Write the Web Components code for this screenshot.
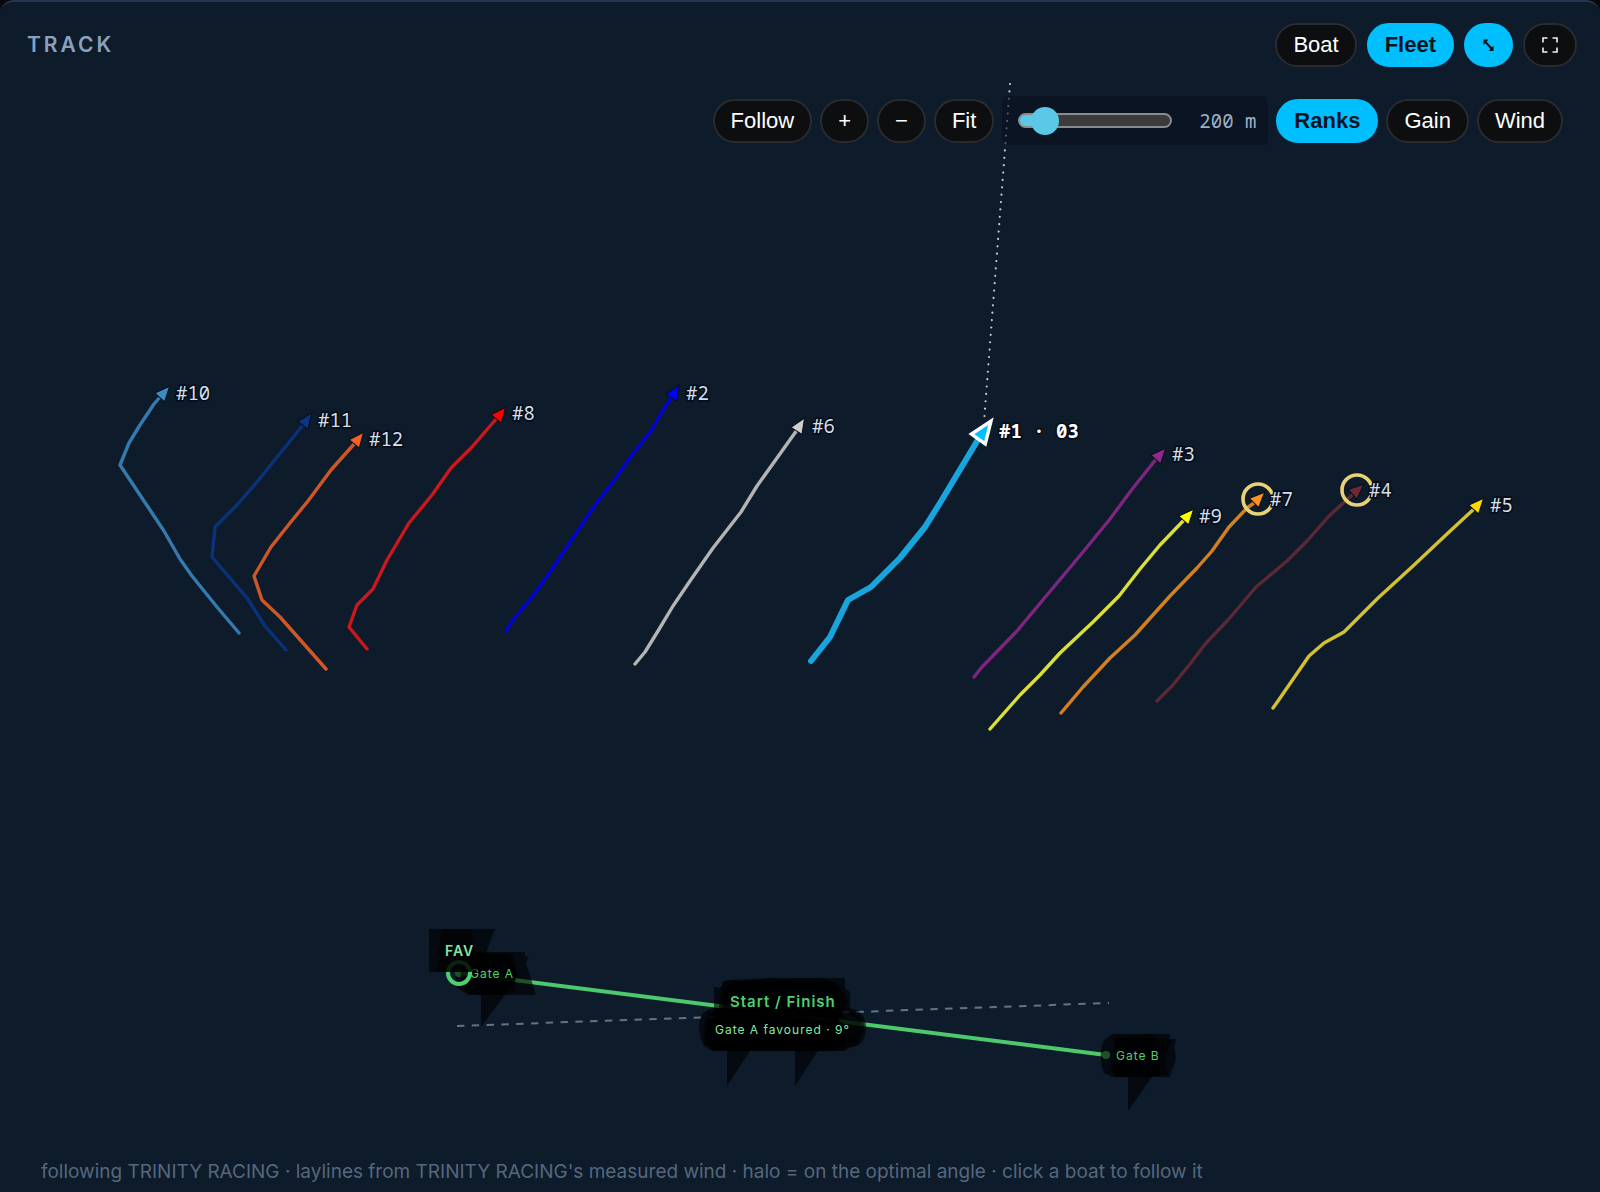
<!DOCTYPE html>
<html lang="en">
<head>
<meta charset="utf-8">
<title>Track</title>
<style>
  body {
    margin: 0;
    background: #0a0a0a;
    font-family: Inter, "Liberation Sans", sans-serif;
  }
</style>
</head>
<body>
<track-card heading="Track">
  <pill-button slot="actions">Boat</pill-button>
  <pill-button slot="actions" active>Fleet</pill-button>
  <pill-button slot="actions" active label="Resize">
    <svg width="13" height="14" viewBox="0 0 13 14" fill="none" stroke="#06141f" stroke-width="2">
      <path d="M3.500 4L9.500 10.500"/>
      <path d="M1.500 1.500H6.500L1.500 7ZM11.500 13H6.500L11.500 7.500Z" fill="#06141f" stroke="none"/>
    </svg>
  </pill-button>
  <pill-button slot="actions" label="Full screen">
    <svg width="18" height="16" viewBox="0 0 18 16" fill="none" stroke="#f2f2f2" stroke-width="1.600">
      <path d="M2 5.500V1H6.500M11.500 1H16V5.500M16 10.500V15H11.500M6.500 15H2V10.500"/>
    </svg>
  </pill-button>

  <map-toolbar slot="tools">
    <pill-button>Follow</pill-button>
    <pill-button>+</pill-button>
    <pill-button>−</pill-button>
    <pill-button>Fit</pill-button>
    <tail-slider value="200"></tail-slider>
    <pill-button active>Ranks</pill-button>
    <pill-button>Gain</pill-button>
    <pill-button>Wind</pill-button>
  </map-toolbar>

  <race-map slot="map"></race-map>

  <span slot="note">following TRINITY RACING · laylines from TRINITY RACING's measured wind · halo = on the optimal angle · click a boat to follow it</span>
</track-card>

<script>
class TrackCard extends HTMLElement {
  constructor() {
    super();
    this.attachShadow({ mode: "open" });
    this.render();
  }

  render() {
    this.shadowRoot.innerHTML = `
      <style>
        :host {
          display: flex;
          flex-direction: column;
          box-sizing: border-box;
          min-height: 100vh;
          background: #0d1b2a;
          border-top: 2px solid #22344f;
          border-radius: 14px 14px 0 0;
          overflow: hidden;
        }
        header {
          display: flex;
          justify-content: space-between;
          align-items: center;
          padding: 21px 23px 15px 27px;
        }
        h2 {
          margin: 0;
          font-size: 21px;
          font-weight: 600;
          line-height: 24px;
          letter-spacing: 3px;
          text-transform: uppercase;
          color: #8aa0bf;
        }
        .actions {
          display: flex;
          gap: 10px;
        }
        .stage {
          display: grid;
        }
        .map,
        .tools {
          grid-area: 1 / 1;
        }
        .tools {
          z-index: 1;
          justify-self: end;
          align-self: start;
          padding: 14px 37px 0 0;
        }
        footer {
          padding: 0 41px 6px;
          font-size: 19px;
          line-height: 28px;
          color: #56677d;
        }
      </style>
      <header>
        <h2></h2>
        <div class="actions"><slot name="actions"></slot></div>
      </header>
      <div class="stage">
        <div class="map"><slot name="map"></slot></div>
        <div class="tools"><slot name="tools"></slot></div>
      </div>
      <footer><slot name="note"></slot></footer>
    `;
    this.shadowRoot.querySelector("h2").textContent = this.getAttribute("heading");
  }
}

class PillButton extends HTMLElement {
  constructor() {
    super();
    this.attachShadow({ mode: "open" });
    this.render();
  }

  render() {
    this.shadowRoot.innerHTML = `
      <style>
        :host {
          display: inline-flex;
        }
        button {
          display: flex;
          align-items: center;
          justify-content: center;
          height: 44px;
          padding: 0 16px;
          border: 2px solid #2a2b2e;
          border-radius: 22px;
          background: #0d0e10;
          color: #fff;
          font: 22px "Liberation Sans", Arial, sans-serif;
          cursor: pointer;
        }
        :host([active]) button {
          border-color: #00bfff;
          background: #00bfff;
          color: #06141f;
          font-weight: bold;
        }
      </style>
      <button type="button"><slot></slot></button>
    `;
    if (this.hasAttribute("label")) {
      this.shadowRoot.querySelector("button").setAttribute("aria-label", this.getAttribute("label"));
    }
  }
}

class MapToolbar extends HTMLElement {
  constructor() {
    super();
    this.attachShadow({ mode: "open" });
    this.shadowRoot.innerHTML = `
      <style>
        :host {
          display: flex;
          align-items: center;
          gap: 8px;
        }
      </style>
      <slot></slot>
    `;
  }
}

class TailSlider extends HTMLElement {
  constructor() {
    super();
    this.attachShadow({ mode: "open" });
    this.render();
  }

  render() {
    this.shadowRoot.innerHTML = `
      <style>
        :host {
          display: flex;
          align-items: center;
          gap: 10px;
          height: 49px;
          padding: 0 12px 0 16px;
          border-radius: 6px;
          background: rgba(8, 16, 30, 0.6);
        }
        input {
          appearance: none;
          width: 154px;
          height: 28px;
          margin: 0;
          background: none;
        }
        input::-webkit-slider-runnable-track {
          box-sizing: border-box;
          height: 15px;
          border: 2px solid #8b8b8b;
          border-radius: 8px;
          background: linear-gradient(90deg, #5bc8e8 24px, #3b3b3b 24px);
        }
        input::-webkit-slider-thumb {
          appearance: none;
          width: 28px;
          height: 28px;
          margin-top: -8px;
          border-radius: 50%;
          background: #5bc8e8;
        }
        output {
          min-width: 74px;
          text-align: right;
          font: 19px "Noto Sans Mono", "DejaVu Sans Mono", monospace;
          color: #9fb0c6;
        }
      </style>
      <input id="tail" type="range" min="80" max="1500" aria-label="Tail length">
      <output for="tail"></output>
    `;
    const input = this.shadowRoot.querySelector("input");
    const output = this.shadowRoot.querySelector("output");
    input.value = this.getAttribute("value");
    const update = () => (output.textContent = `${input.value} m`);
    input.addEventListener("input", update);
    update();
  }
}

// tip / base: nose and stern of the arrow, at: where the label starts
const BOATS = [
  { label: "#10", color: "#3d8bc6", tip: [169, 387], base: [161, 396], at: [176, 393],
    path: "239,633 217,607 192,576 180,559 164,531 120,465 129,443 140,425 154,404" },
  { label: "#11", color: "#0b3688", tip: [311, 414], base: [303, 425], at: [318, 420],
    path: "286,650 265,626 247,598 212,557 215,527 237,505 257,482" },
  { label: "#12", color: "#f26227", tip: [363, 433], base: [355, 443], at: [369, 439],
    path: "326,669 280,617 262,600 254,576 271,547 290,523 308,501 331,470" },
  { label: "#8", color: "#ff0000", line: "#ca181c", tip: [505, 408], base: [497, 418], at: [512, 413],
    path: "367,649 349,627 357,605 373,589 387,560 409,523 432,495 451,468 472,447" },
  { label: "#2", color: "#0000ff", line: "#0303d4", tip: [679, 386], base: [671, 398], at: [686, 393],
    path: "506,631 513,620 533,596 553,568 573,538 593,508 613,482 632,455 651,431 662,412" },
  { label: "#6", color: "#d2cfcb", tip: [804, 419], base: [797, 430], at: [812, 426],
    path: "635,664 645,652 658,631 673,606 690,581 713,548 741,512 757,486" },
  { label: "#3", color: "#93278f", tip: [1165, 449], base: [1157, 458], at: [1172, 454],
    path: "974,677 982,667 1017,631 1047,595 1083,552 1110,519 1133,488" },
  { label: "#9", color: "#ffff00", line: "#dbdf38", tip: [1193, 510], base: [1185, 519], at: [1199, 516],
    path: "990,729 1020,695 1040,675 1060,653 1093,622 1119,596 1140,569 1160,545" },
  { label: "#7", color: "#f7931e", tip: [1264, 493], base: [1254, 503], at: [1270, 499], halo: [1258, 499],
    path: "1061,713 1083,687 1110,658 1135,635 1170,596 1197,568 1212,551 1229,527 1247,508" },
  { label: "#4", color: "#6b2a36", tip: [1363, 485], base: [1353, 494], at: [1369, 490], halo: [1357, 490],
    path: "1157,701 1172,686 1190,664 1206,643 1228,620 1256,587 1287,561 1308,540 1329,516" },
  { label: "#5", color: "#ffd900", line: "#d4c030", tip: [1483, 499], base: [1475, 508], at: [1490, 505],
    path: "1273,708 1278,701 1309,656 1324,643 1344,632 1378,598 1413,566 1448,533" },
  { label: "#1 · 03", color: "#00bfff", line: "#18a4dc", tip: [991, 421], base: [979, 438], at: [999, 431], lead: true,
    path: "811,661 815,656 830,637 848,600 871,587 900,558 925,527 940,503 955,478" },
];

class RaceMap extends HTMLElement {
  constructor() {
    super();
    this.attachShadow({ mode: "open" });
    this.render();
  }

  boat(b) {
    const angle = Math.atan2(b.tip[0] - b.base[0], b.base[1] - b.tip[1]) * 180 / Math.PI;
    const shape = b.lead ? "M0 0L8.500 22H-8.500Z" : "M0 -1L6.500 14H-6.500Z";
    return `
      <g class="${b.lead ? "boat lead" : "boat"}">
        <polyline points="${b.path} ${b.base}" stroke="${b.line || b.color}" opacity="${b.line ? 1 : 0.85}"/>
        ${b.halo ? `<circle class="halo" cx="${b.halo[0]}" cy="${b.halo[1]}" r="15"/>` : ""}
        <path class="arrow" d="${shape}" fill="${b.color}" transform="translate(${b.tip}) rotate(${angle})"/>
        <text x="${b.at[0]}" y="${b.at[1] + 7}">${b.label}</text>
      </g>
    `;
  }

  render() {
    this.shadowRoot.innerHTML = `
      <style>
        :host {
          display: block;
        }
        svg {
          display: block;
          width: 100%;
          height: auto;
        }
        .boat polyline {
          fill: none;
          stroke-width: 3.4;
          stroke-linecap: round;
          stroke-linejoin: round;
        }
        .arrow {
          stroke: #07101a;
          stroke-width: 1;
        }
        .boat text {
          font: 19px "Noto Sans Mono", "DejaVu Sans Mono", monospace;
          fill: #d5deeb;
          stroke: #060d16;
          stroke-width: 3;
          paint-order: stroke;
        }
        .halo {
          fill: none;
          stroke: #e8d274;
          stroke-width: 3.6;
        }
        .lead polyline {
          stroke-width: 6;
        }
        .lead .arrow {
          stroke: #fff;
          stroke-width: 3.4;
        }
        .boat.lead text {
          font-weight: bold;
          fill: #fff;
        }
        .layline {
          stroke: #c3ccd8;
          stroke-width: 2.2;
          stroke-linecap: round;
          stroke-dasharray: 0 7.4;
        }
        .square {
          stroke: #657388;
          stroke-width: 2;
          stroke-dasharray: 7.4 7.4;
        }
        .gate {
          stroke: #4cc96a;
          stroke-width: 4;
        }
        .shade {
          fill: #000;
          fill-opacity: 0.6;
        }
        .mark {
          font: 12px Inter, sans-serif;
          letter-spacing: 1px;
          fill: #4fce6f;
        }
        .title {
          font-size: 15px;
          font-weight: 600;
        }
        .fav {
          font-size: 14px;
          font-weight: 600;
        }
        .pale {
          fill: #86e5a4;
        }
      </style>
      <svg viewBox="0 82 1600 1076" role="img" aria-label="Fleet track map">
        <line class="layline" x1="1010" y1="84" x2="984" y2="422"/>
        ${BOATS.map((b) => this.boat(b)).join("")}

        <line class="square" x1="457" y1="1026" x2="1109" y2="1003"/>
        <line class="gate" x1="459" y1="973" x2="1106" y2="1055"/>

        <!-- gate A -->
        <circle cx="459" cy="973" r="4" fill="#4cc96a"/>
        <path class="shade" d="M452 952H525V957L529 956L526 963L536 995H469L457 988Z"/>
        <path class="shade" d="M462 954H507L516 970L515 991L500 995H470L460 985Z"/>
        <path class="shade" d="M470 953H512L518 975L505 995H475Z"/>
        <path class="shade" d="M481 995H505L481 1027Z"/>
        <text class="mark" x="470" y="978">Gate A</text>
        <circle cx="459" cy="973" r="11" fill="none" stroke="#4fd070" stroke-width="4"/>
        <path class="shade" d="M429 929H495L481 967L475 972H429Z"/>
        <path class="shade" d="M442 929H471L475 950L480 965L470 972H436Z"/>
        <text class="mark fav pale" x="445" y="956">FAV</text>

        <!-- start / finish -->
        <path class="shade" d="M714 987L720 988L726 981Q730 979 740 981L768 978H845V988L850 992V1010H714Z"/>
        <path class="shade" d="M722 982Q730 978 790 979Q832 975 840 988L848 1000L842 1016H718Z"/>
        <path class="shade" d="M724 990Q730 981 745 981H825Q840 983 842 995L838 1012H722Z"/>
        <path class="shade" d="M714 1008H845Q866 1008 866 1027Q866 1046 850 1047L845 1051H712L704 1046Q699 1038 699 1024Q701 1009 714 1008Z"/>
        <path class="shade" d="M718 1010H838L846 1018L860 1022L859 1045L838 1051H714L704 1044L708 1018Z"/>
        <path class="shade" d="M708 1012H830L842 1022L846 1046L830 1051H716Q704 1046 704 1030Z"/>
        <path class="shade" d="M714 1008H838V1051H714Z"/>
        <circle cx="848" cy="1027" r="14" fill="none" stroke="#000" stroke-opacity="0.5" stroke-width="4"/>
        <path class="shade" d="M727 1051H750L727 1086ZM795 1051H818L795 1086Z"/>
        <text class="mark title" x="730" y="1007">Start / Finish</text>
        <text class="mark pale" x="715" y="1034">Gate A favoured · 9°</text>

        <!-- gate B -->
        <circle cx="1106" cy="1055" r="4" fill="#4cc96a"/>
        <path class="shade" d="M1104 1040L1112 1034H1170V1039H1176L1174 1048Q1178 1060 1172 1070L1170 1077H1112L1104 1073Q1097 1056 1104 1040Z"/>
        <path class="shade" d="M1116 1036L1150 1034Q1160 1040 1172 1040L1164 1060L1168 1074L1150 1077H1116Q1106 1066 1114 1058Z"/>
        <path class="shade" d="M1113 1038H1154L1160 1050V1077H1116Z"/>
        <path class="shade" d="M1128 1077H1152L1128 1111Z"/>
        <text class="mark" x="1116" y="1060">Gate B</text>
      </svg>
    `;
  }
}

customElements.define("track-card", TrackCard);
customElements.define("pill-button", PillButton);
customElements.define("map-toolbar", MapToolbar);
customElements.define("tail-slider", TailSlider);
customElements.define("race-map", RaceMap);
</script>
</body>
</html>
